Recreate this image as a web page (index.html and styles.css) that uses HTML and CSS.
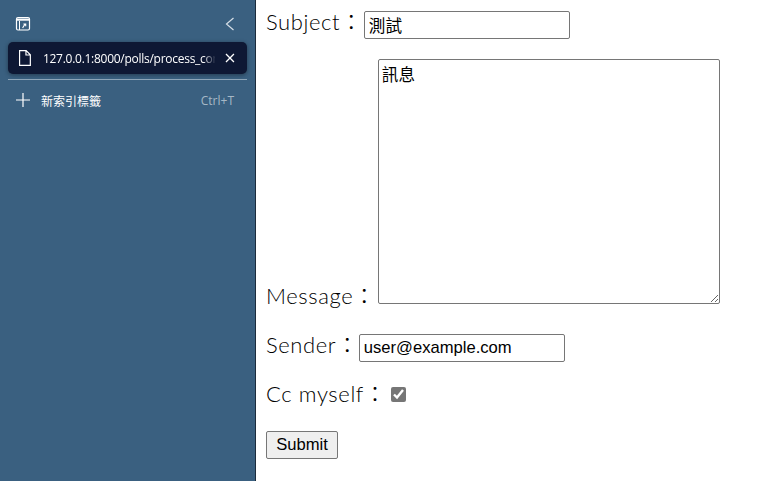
FILE: index.html
```html
<!DOCTYPE html>
<html lang="zh-Hant">
<head>
<meta charset="utf-8">
<title>Form</title>
<link rel="stylesheet" href="styles.css">
</head>
<body>
<aside class="sidebar">
  <div class="side-top">
    <svg class="icon" width="16" height="16" viewBox="0 0 16 16" fill="none" stroke="#fff"><rect x="1.5" y="1.5" width="13" height="12.5" rx="1.5" stroke-width="1.2"/><path d="M1.5 3.6h13" stroke-width="2.2"/><path d="M4.5 5v9" stroke-width="1"/><path d="M7.6 12l2.2-3.6M8.4 8h2.3v2.2" stroke-width="1.1"/></svg>
    <svg class="icon" width="16" height="16" viewBox="0 0 16 16" fill="none" stroke="#d5dee6" stroke-width="1.2"><path d="M11.5 2L4.5 8l7 6"/></svg>
  </div>
  <div class="tab">
    <svg width="16" height="18" viewBox="0 0 16 18" fill="none" stroke="#fff" stroke-width="1.2"><path d="M2.6 1.6h6.6l4.2 4.2v10.6H2.6zM9 1.8v4.2h4.2"/></svg>
    <span class="tab-title">127.0.0.1:8000/polls/process_contact</span>
    <svg width="12" height="12" viewBox="0 0 12 12" fill="none" stroke="#fff" stroke-width="1.3"><path d="M2 2l8 8M10 2l-8 8"/></svg>
  </div>
  <div class="divider"></div>
  <div class="new-tab">
    <svg width="16" height="16" viewBox="0 0 16 16" fill="none" stroke="#fff" stroke-width="1.2"><path d="M8 1v14M1 8h14"/></svg>
    <span class="new-label">新索引標籤</span>
    <span class="shortcut">Ctrl+T</span>
  </div>
</aside>
<main class="content">
  <form class="form">
    <div class="row row-subject"><label class="label label-subject">Subject：</label><input class="field" type="text" value="測試"></div>
    <div class="row row-message"><label class="label label-message">Message：</label><textarea class="message">訊息</textarea></div>
    <div class="row row-sender"><label class="label">Sender：</label><input class="field" type="text" value="user@example.com"></div>
    <div class="row row-cc"><label class="label">Cc myself：</label><input class="check" type="checkbox" checked></div>
    <div class="row"><button class="submit" type="button">Submit</button></div>
  </form>
</main>
</body>
</html>
```

FILE: styles.css
```css
html, body {
  margin: 0;
  height: 481px;
  overflow: hidden;
  background: #fff;
}
body {
  display: flex;
  font-family: "Liberation Sans", "Noto Sans CJK TC", sans-serif;
}
.sidebar {
  box-sizing: border-box;
  width: 256px;
  flex: none;
  background: #3a6080;
  border-right: 1px solid #1c2c3c;
  padding: 0 8px;
  color: #fff;
}
.side-top {
  height: 42px;
  padding: 6px 9px 0 7px;
  display: flex;
  align-items: center;
  justify-content: space-between;
  box-sizing: border-box;
}
.icon { display: block; }
.tab {
  height: 32px;
  background: #0e1834;
  border-radius: 5px;
  box-shadow: 0 1px 4px rgba(0, 0, 0, 0.4);
  display: flex;
  align-items: center;
  padding: 0 11px 0 9px;
}
.tab-title {
  margin: 0 9px 0 10px;
  width: 173px;
  white-space: nowrap;
  overflow: hidden;
  font: 12px "Open Sans", "Liberation Sans", sans-serif;
  letter-spacing: -0.27px;
  -webkit-mask-image: linear-gradient(to right, #000 160px, transparent 173px);
  mask-image: linear-gradient(to right, #000 160px, transparent 173px);
}
.divider {
  height: 1px;
  background: #8da5b8;
  margin-top: 5px;
}
.new-tab {
  display: flex;
  align-items: center;
  height: 40px;
  padding: 0 13px 0 7px;
}
.new-label {
  margin-left: 10px;
  font: 12px "Noto Sans CJK TC", sans-serif;
  flex: 1;
}
.shortcut {
  font: 12px "Open Sans", "Liberation Sans", sans-serif;
  color: #a6b8c6;
}
.content {
  flex: 1;
  padding: 11px 0 0 10px;
}
.row { display: flex; white-space: nowrap; align-items: flex-start; }
.row-subject { height: 28px; margin-bottom: 20px; }
.row-message { margin-bottom: 30px; height: 245px; align-items: flex-end; }
.row-sender { height: 28px; margin-bottom: 21px; }
.row-cc { height: 27px; margin-bottom: 21px; }
.label {
  font: 300 22px/22px "Lato", "Noto Sans CJK TC", sans-serif;
  letter-spacing: 0.6px;
  color: #000;
}
.label-subject { margin-right: 1px; }
.label-message { margin-bottom: -3px; margin-right: 2px; }
.field {
  box-sizing: border-box;
  width: 206px;
  height: 28px;
  font: 16.6px "Liberation Sans", "Noto Sans CJK TC", sans-serif;
  border: 1px solid #767676;
  border-radius: 2px;
  padding: 0 4px;
  margin: 0;
  color: #000;
}
.message {
  box-sizing: border-box;
  width: 342px;
  height: 245px;
  font: 16.6px "Liberation Sans", "Noto Sans CJK TC", sans-serif;
  border: 1px solid #767676;
  border-radius: 2px;
  padding: 2px 3px;
  margin: 0;
}
.check {
  width: 15px;
  height: 15px;
  margin: 4px 0 0 4px;
  accent-color: #767676;
}
.submit {
  box-sizing: border-box;
  width: 72px;
  height: 28px;
  font: 16.6px "Liberation Sans", sans-serif;
  background: #efefef;
  border: 1px solid #767676;
  border-radius: 2px;
  padding: 0;
  color: #000;
  display: block;
}
```
